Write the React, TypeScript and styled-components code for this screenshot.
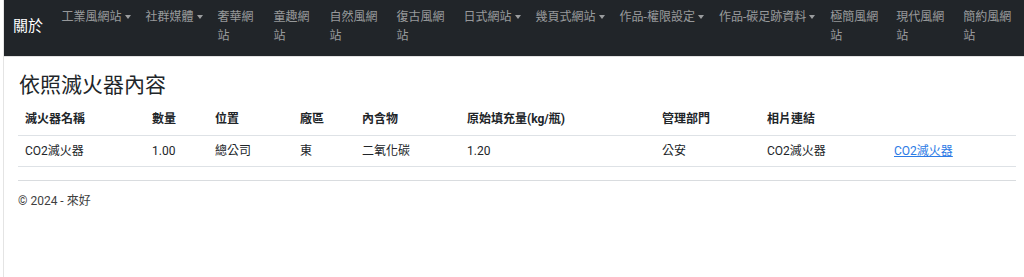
import React from 'react';
import styled, { createGlobalStyle } from 'styled-components';

const GlobalStyle = createGlobalStyle`
	html, body {
		margin: 0;
		padding: 0;
		background: #fff;
	}
	body {
		font-family: 'Segoe UI', Roboto, 'Noto Sans', 'Noto Sans CJK TC', sans-serif;
		color: #212529;
	}
`;

const Page = styled.div`
	margin-left: 3px;
	border-left: 1px solid #e4e4e4;
	min-height: 277px;
`;

const Navbar = styled.nav`
	display: flex;
	align-items: flex-start;
	height: 56px;
	background: #212529;
	border-bottom: 1px solid #e2e2e2;
	box-sizing: content-box;
	padding-left: 9px;
	overflow: hidden;
`;

const Brand = styled.a`
	color: #fff;
	font-size: 15px;
	line-height: 20px;
	margin-top: 16px;
	margin-right: 11px;
	text-decoration: none;
	white-space: nowrap;
`;

const NavList = styled.ul`
	display: flex;
	align-items: flex-start;
	list-style: none;
	margin: 0;
	padding: 8px 0 0;
`;

const NavItem = styled.li<{ $w?: number }>`
	padding: 0 7.5px;
	font-size: 12px;
	line-height: 19px;
	color: rgba(255, 255, 255, 0.55);
	white-space: ${(p) => (p.$w ? 'normal' : 'nowrap')};
	width: ${(p) => (p.$w ? `${p.$w}px` : 'auto')};
	flex-shrink: 0;
`;

const Caret = styled.span`
	display: inline-block;
	margin-left: 3px;
	vertical-align: 2px;
	border-top: 4px solid rgba(255, 255, 255, 0.55);
	border-left: 3px solid transparent;
	border-right: 3px solid transparent;
`;

const Main = styled.main`
	padding: 16px 7px 0 14px;
`;

const Title = styled.h3`
	margin: 0 0 6px 1px;
	font-size: 21px;
	line-height: 25px;
	font-weight: 400;
`;

const Table = styled.table`
	width: 998px;
	border-collapse: collapse;
	table-layout: fixed;
	font-size: 12px;
	margin-bottom: 13px;
`;

const HeadCell = styled.th`
	text-align: left;
	font-weight: 700;
	padding: 6px 7px;
	line-height: 19px;
	border-bottom: 1px solid #dee2e6;
`;

const Cell = styled.td`
	padding: 6px 7px;
	line-height: 18px;
	border-bottom: 1px solid #dee2e6;
`;

const Link = styled.a`
	color: #2c7be5;
	text-decoration: underline;
`;

const Footer = styled.footer`
	width: 998px;
	border-top: 1px solid #d9dcdf;
	padding-top: 10px;
	font-size: 12px;
	line-height: 20px;
	color: #3f3f3f;
`;

const navItems: { label: string; dropdown?: boolean; w?: number }[] = [
	{ label: '工業風網站', dropdown: true },
	{ label: '社群媒體', dropdown: true },
	{ label: '奢華網站', w: 41 },
	{ label: '童趣網站', w: 41 },
	{ label: '自然風網站', w: 52 },
	{ label: '復古風網站', w: 52 },
	{ label: '日式網站', dropdown: true },
	{ label: '幾頁式網站', dropdown: true },
	{ label: '作品-權限設定', dropdown: true },
	{ label: '作品-碳足跡資料', dropdown: true },
	{ label: '極簡風網站', w: 51 },
	{ label: '現代風網站', w: 52 },
	{ label: '簡約風網站', w: 50 },
];

const columns = [
	{ name: '滅火器名稱', w: 127 },
	{ name: '數量', w: 63 },
	{ name: '位置', w: 85 },
	{ name: '廠區', w: 62 },
	{ name: '內含物', w: 105 },
	{ name: '原始填充量(kg/瓶)', w: 195 },
	{ name: '管理部門', w: 105 },
	{ name: '相片連結', w: 127 },
	{ name: '', w: 129 },
];

const row = ['CO2滅火器', '1.00', '總公司', '東', '二氧化碳', '1.20', '公安', 'CO2滅火器'];

export default function App() {
	return (
		<Page>
			<GlobalStyle />
			<Navbar>
				<Brand href='#'>關於</Brand>
				<NavList>
					{navItems.map((item) => (
						<NavItem key={item.label} $w={item.w}>
							{item.label}
							{item.dropdown ? <Caret /> : null}
						</NavItem>
					))}
				</NavList>
			</Navbar>
			<Main>
				<Title>依照滅火器內容</Title>
				<Table>
					<colgroup>
						{columns.map((c, i) => (
							<col key={i} style={{ width: c.w }} />
						))}
					</colgroup>
					<thead>
						<tr>
							{columns.map((c, i) => (
								<HeadCell key={i}>{c.name}</HeadCell>
							))}
						</tr>
					</thead>
					<tbody>
						<tr>
							{row.map((v, i) => (
								<Cell key={i}>{v}</Cell>
							))}
							<Cell>
								<Link href='#'>CO2滅火器</Link>
							</Cell>
						</tr>
					</tbody>
				</Table>
				<Footer>© 2024 - 來好</Footer>
			</Main>
		</Page>
	);
}
